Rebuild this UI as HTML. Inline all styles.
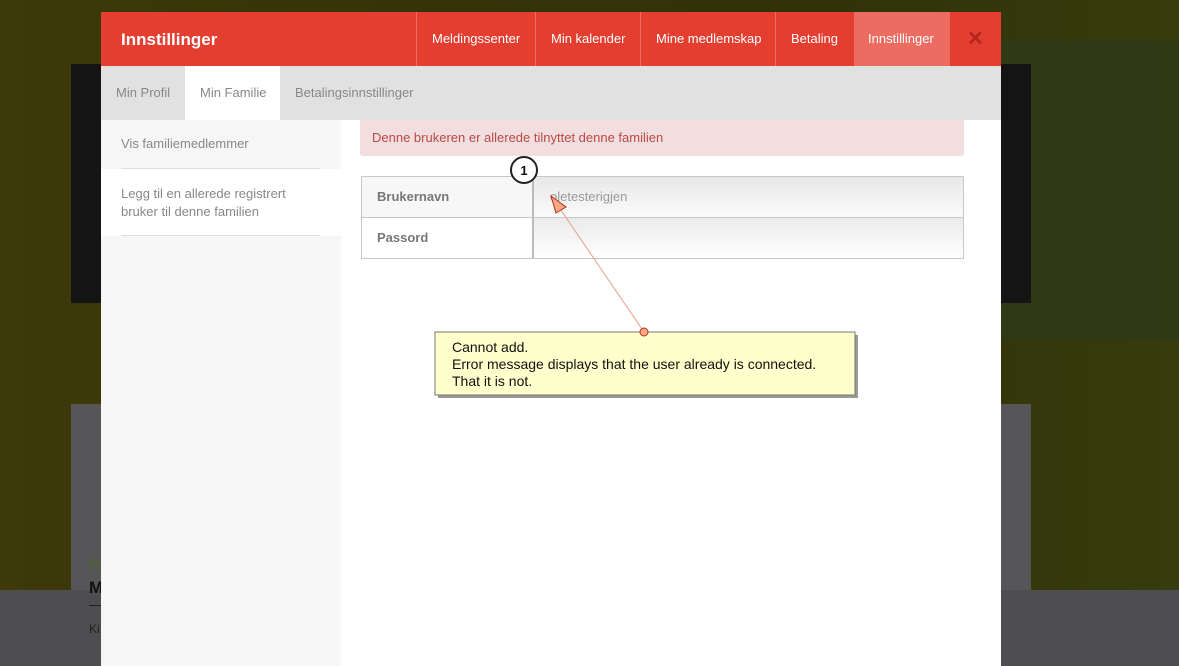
<!DOCTYPE html>
<html><head><meta charset="utf-8"><style>
*{margin:0;padding:0;box-sizing:border-box}
body{width:1179px;height:666px;overflow:hidden;position:relative;font-family:"Liberation Sans",sans-serif;background:#3a3608}
.abs{position:absolute}
</style></head><body>
<div class="abs" style="left:0;top:0;width:1179px;height:590px;background:linear-gradient(90deg,#3d3909 0%,#353208 40%,#313208 70%,#363c0e 100%)"></div>
<div class="abs" style="left:1000px;top:40px;width:179px;height:300px;background:#2e3a18;opacity:.8"></div>
<div class="abs" style="left:71px;top:64px;width:960px;height:239px;background:#141414"></div>
<div class="abs" style="left:71px;top:404px;width:960px;height:186px;background:#565658"></div>
<div class="abs" style="left:0;top:590px;width:1179px;height:76px;background:#4e4e50"></div>
<div class="abs" style="left:89px;top:578px;font-size:17px;font-weight:bold;color:#111">M</div>
<div class="abs" style="left:89px;top:605px;width:20px;height:1px;background:#222"></div>
<div class="abs" style="left:89px;top:622px;font-size:12px;color:#222">Ki</div>
<div class="abs" style="left:89px;top:556px;font-size:14px;color:#4a6a20">G</div>

<div class="abs" style="left:101px;top:12px;width:900px;height:654px;background:#fff">
  <div class="abs" style="left:0;top:0;width:900px;height:54px;background:#e43e31"></div>
  <div class="abs" style="left:20px;top:18px;font-size:17px;font-weight:bold;color:#fff">Innstillinger</div>
  <div class="abs" style="left:315px;top:0;width:1px;height:54px;background:#ef6b5f"></div>
  <div class="abs" style="left:331px;top:19px;font-size:13px;color:#fff">Meldingssenter</div>
  <div class="abs" style="left:434px;top:0;width:1px;height:54px;background:#ef6b5f"></div>
  <div class="abs" style="left:450px;top:19px;font-size:13px;color:#fff">Min kalender</div>
  <div class="abs" style="left:539px;top:0;width:1px;height:54px;background:#ef6b5f"></div>
  <div class="abs" style="left:555px;top:19px;font-size:13px;color:#fff">Mine medlemskap</div>
  <div class="abs" style="left:674px;top:0;width:1px;height:54px;background:#ef6b5f"></div>
  <div class="abs" style="left:690px;top:19px;font-size:13px;color:#fff">Betaling</div>
  <div class="abs" style="left:753px;top:0;width:96px;height:54px;background:#ec6c62"></div>
  <div class="abs" style="left:767px;top:19px;font-size:13px;color:#fff">Innstillinger</div>
  <div class="abs" style="left:866px;top:14px;font-size:20px;font-weight:bold;color:#b3271d">✕</div>

  <div class="abs" style="left:0;top:54px;width:900px;height:54px;background:#e1e1e1"></div>
  <div class="abs" style="left:84px;top:54px;width:95px;height:54px;background:#fff"></div>
  <div class="abs" style="left:15px;top:73px;font-size:13px;color:#888">Min Profil</div>
  <div class="abs" style="left:99px;top:73px;font-size:13px;color:#888">Min Familie</div>
  <div class="abs" style="left:194px;top:73px;font-size:13px;color:#888">Betalingsinnstillinger</div>

  <div class="abs" style="left:0;top:108px;width:240px;height:546px;background:#f6f6f6"></div>
  <div class="abs" style="left:0;top:157px;width:240px;height:67px;background:#fff"></div>
  <div class="abs" style="left:20px;top:124px;font-size:13px;color:#888">Vis familiemedlemmer</div>
  <div class="abs" style="left:20px;top:156px;width:199px;height:1px;background:#ddd"></div>
  <div class="abs" style="left:20px;top:173px;font-size:13px;line-height:18px;color:#888">Legg til en allerede registrert<br>bruker til denne familien</div>
  <div class="abs" style="left:20px;top:223px;width:199px;height:1px;background:#ddd"></div>

  <div class="abs" style="left:259px;top:108px;width:604px;height:36px;background:#f2dede;border-radius:0 0 3px 3px"></div>
  <div class="abs" style="left:271px;top:118px;font-size:13px;color:#b94a48">Denne brukeren er allerede tilnyttet denne familien</div>

  <div class="abs" style="left:260px;top:164px;width:603px;height:83px;border:1px solid #c8c8c8"></div>
  <div class="abs" style="left:261px;top:165px;width:170px;height:40px;background:#f7f7f7"></div>
  <div class="abs" style="left:261px;top:205px;width:602px;height:1px;background:#c8c8c8"></div>
  <div class="abs" style="left:431px;top:165px;width:2px;height:81px;background:#bbb"></div>
  <div class="abs" style="left:433px;top:165px;width:429px;height:40px;background:linear-gradient(#e8e8e8,#fafafa)"></div>
  <div class="abs" style="left:433px;top:206px;width:429px;height:40px;background:linear-gradient(#eaeaea,#fff)"></div>
  <div class="abs" style="left:276px;top:177px;font-size:13px;font-weight:bold;color:#777">Brukernavn</div>
  <div class="abs" style="left:276px;top:218px;font-size:13px;font-weight:bold;color:#777">Passord</div>
  <div class="abs" style="left:449px;top:177px;font-size:13px;color:#999">oletesterigjen</div>
</div>

<svg class="abs" style="left:0;top:0" width="1179" height="666">
  <line x1="554" y1="200" x2="644" y2="332" stroke="#e8a080" stroke-width="1"/>
  <polygon points="551,196 566,207 556,213" fill="#f9a882" stroke="#b03020" stroke-width="1"/>
  <circle cx="524" cy="170" r="13" fill="#fff" stroke="#222" stroke-width="2"/>
  <text x="524" y="175" text-anchor="middle" font-family="Liberation Sans" font-size="13" font-weight="bold" fill="#111">1</text>
  <rect x="438" y="335" width="420" height="63" fill="#9a9a9a"/>
  <rect x="435" y="332" width="420" height="63" fill="#ffffcc" stroke="#777" stroke-width="1"/>
  <circle cx="644" cy="332" r="4" fill="#f9a882" stroke="#b03020" stroke-width="1"/>
  <text font-family="Liberation Sans" font-size="14" fill="#111"><tspan x="452" y="352">Cannot add.</tspan><tspan x="452" y="369">Error message displays that the user already is connected.</tspan><tspan x="452" y="386">That it is not.</tspan></text>
</svg>
</body></html>
